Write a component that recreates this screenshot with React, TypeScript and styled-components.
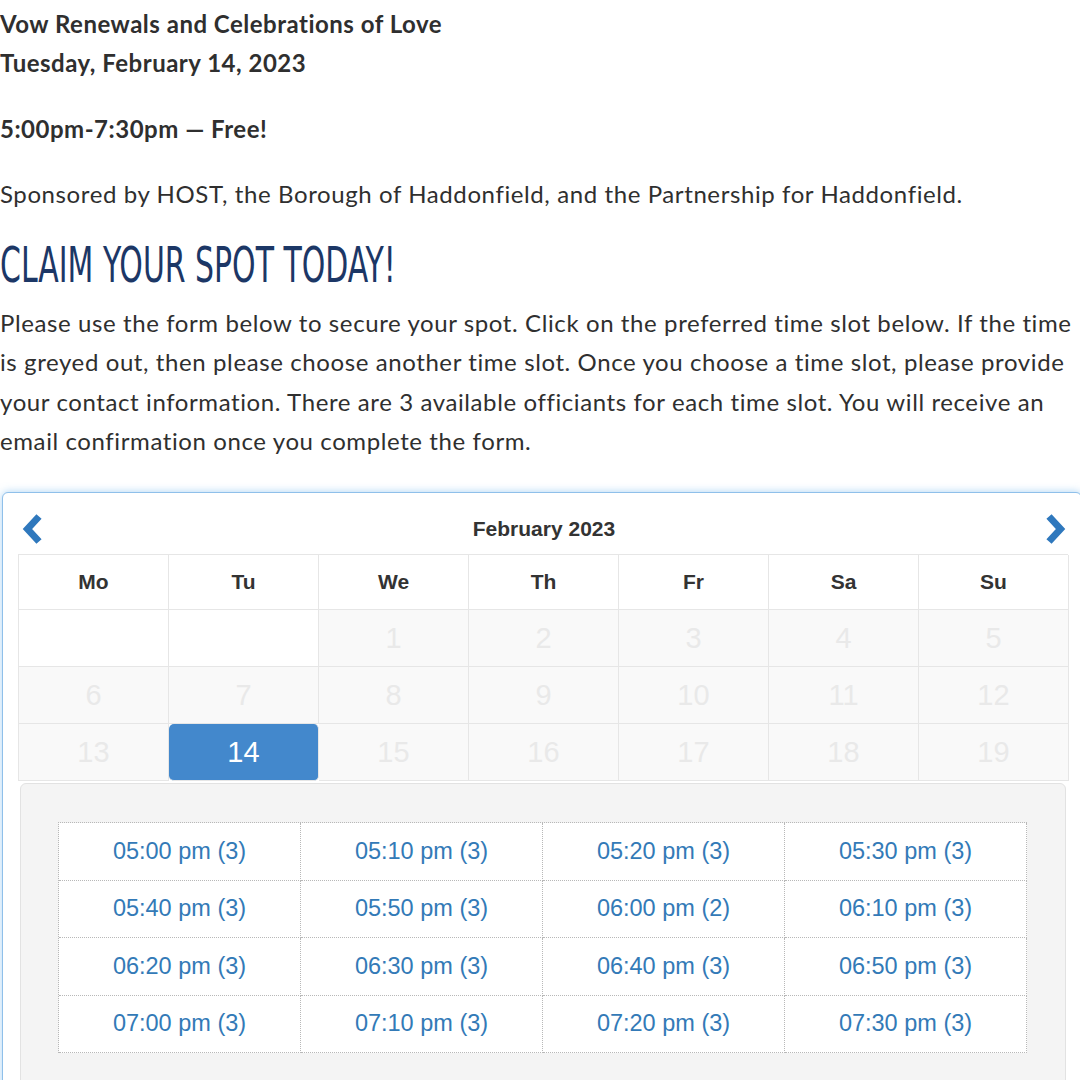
import React from "react";
import styled, { createGlobalStyle } from "styled-components";

const GlobalStyle = createGlobalStyle`
  html, body {
    margin: 0;
    padding: 0;
    background: #ffffff;
    overflow: hidden;
  }
  body {
    font-family: Lato, "Open Sans", sans-serif;
    color: #2f2f2f;
  }
`;

const Page = styled.main`
  width: 1090px;
  padding-top: 4px;
`;

const Line = styled.p<{ $mt?: number; $bold?: boolean }>`
  margin: ${(p) => p.$mt ?? 0}px 0 0;
  font-size: 24px;
  line-height: 39px;
  font-weight: ${(p) => (p.$bold ? 700 : 400)};
  letter-spacing: ${(p) => (p.$bold ? "0.5px" : "0.6px")};
  white-space: nowrap;
`;

const Heading = styled.h2`
  margin: 22px 0 8px;
  height: 60px;
  line-height: 60px;
  font-family: "Liberation Sans Narrow", "DejaVu Sans Condensed", sans-serif;
  font-weight: 400;
  font-size: 50px;
  color: #1c3766;
  transform-origin: left center;
  transform: scaleX(0.665);
  white-space: nowrap;
`;

const Paragraph = styled.p`
  margin: 0;
  font-size: 24px;
  line-height: 39.3px;
  letter-spacing: 0.6px;
  white-space: nowrap;
`;

const Calendar = styled.section`
  margin: 32px 0 0 2px;
  width: 1080px;
  border: 1px solid #8fc0ea;
  border-radius: 6px 6px 0 0;
  box-shadow: 0 0 8px rgba(102, 175, 233, 0.55);
  padding: 0 15px 0;
  box-sizing: border-box;
  background: #ffffff;
  font-family: "Liberation Sans", Arial, sans-serif;
  height: 600px;
`;

const NavRow = styled.div`
  margin-top: 16px;
  height: 40px;
  display: flex;
  align-items: center;
  justify-content: space-between;
  width: 1048px;
  margin-left: 2px;
`;

const Month = styled.div`
  font-weight: 700;
  font-size: 21px;
  color: #333333;
`;

const Arrow = styled.svg`
  width: 24px;
  height: 32px;
  display: block;
`;

const Grid = styled.div`
  margin-top: 5px;
  display: grid;
  grid-template-columns: repeat(7, 150px);
  border-top: 1px solid #e6e6e6;
  border-left: 1px solid #e6e6e6;
  width: 1050px;
  box-sizing: border-box;
`;

const DayName = styled.div`
  height: 54px;
  border-right: 1px solid #e6e6e6;
  border-bottom: 1px solid #e6e6e6;
  display: flex;
  align-items: center;
  justify-content: center;
  font-weight: 700;
  font-size: 21px;
  color: #333333;
`;

const Day = styled.div<{ $state: "empty" | "off" | "active" }>`
  height: 57px;
  box-sizing: border-box;
  border-right: 1px solid #e6e6e6;
  border-bottom: 1px solid #e6e6e6;
  display: flex;
  align-items: center;
  justify-content: center;
  font-size: 29px;
  background: ${(p) =>
    p.$state === "active" ? "#4388cc" : p.$state === "off" ? "#f9f9f9" : "#ffffff"};
  color: ${(p) => (p.$state === "active" ? "#ffffff" : "#e9e9e9")};
  border-radius: ${(p) => (p.$state === "active" ? "5px" : "0")};
`;

const SlotPanel = styled.div`
  margin: 2px 2px 0;
  background: #f4f4f4;
  border: 1px solid #e2e2e2;
  border-radius: 6px 6px 0 0;
  padding: 38px 38px 40px 37px;
  width: 1046px;
  box-sizing: border-box;
`;

const Slots = styled.div`
  display: grid;
  grid-template-columns: repeat(4, 1fr);
  border-top: 1px dotted #b8b8b8;
  border-left: 1px dotted #b8b8b8;
`;

const Slot = styled.div`
  height: 56.5px;
  background: #ffffff;
  border-right: 1px dotted #b8b8b8;
  border-bottom: 1px dotted #b8b8b8;
  display: flex;
  align-items: center;
  justify-content: center;
  font-size: 23.5px;
  color: #337ab7;
`;

const dayNames = ["Mo", "Tu", "We", "Th", "Fr", "Sa", "Su"];

const days: { n: string; state: "empty" | "off" | "active" }[] = [
  { n: "", state: "empty" },
  { n: "", state: "empty" },
  ...["1", "2", "3", "4", "5", "6", "7", "8", "9", "10", "11", "12", "13"].map((n) => ({
    n,
    state: "off" as const,
  })),
  { n: "14", state: "active" },
  ...["15", "16", "17", "18", "19"].map((n) => ({ n, state: "off" as const })),
];

const slots = [
  "05:00 pm (3)", "05:10 pm (3)", "05:20 pm (3)", "05:30 pm (3)",
  "05:40 pm (3)", "05:50 pm (3)", "06:00 pm (2)", "06:10 pm (3)",
  "06:20 pm (3)", "06:30 pm (3)", "06:40 pm (3)", "06:50 pm (3)",
  "07:00 pm (3)", "07:10 pm (3)", "07:20 pm (3)", "07:30 pm (3)",
];

const App: React.FC = () => (
  <>
    <GlobalStyle />
    <Page>
      <Line $bold>Vow Renewals and Celebrations of Love</Line>
      <Line $bold>Tuesday, February 14, 2023</Line>
      <Line $bold $mt={27}>5:00pm-7:30pm — Free!</Line>
      <Line $mt={26}>
        Sponsored by HOST, the Borough of Haddonfield, and the Partnership for Haddonfield.
      </Line>
      <Heading>CLAIM YOUR SPOT TODAY!</Heading>
      <Paragraph>
        Please use the form below to secure your spot. Click on the preferred time slot below. If the time
        <br />
        is greyed out, then please choose another time slot. Once you choose a time slot, please provide
        <br />
        your contact information. There are 3 available officiants for each time slot. You will receive an
        <br />
        email confirmation once you complete the form.
      </Paragraph>

      <Calendar>
        <NavRow>
          <Arrow viewBox="0 0 24 32">
            <polyline points="19,3.5 7.5,16 19,28.5" fill="none" stroke="#2f78bd" strokeWidth="7" strokeLinejoin="miter" />
          </Arrow>
          <Month>February 2023</Month>
          <Arrow viewBox="0 0 24 32">
            <polyline points="5,3.5 16.5,16 5,28.5" fill="none" stroke="#2f78bd" strokeWidth="7" strokeLinejoin="miter" />
          </Arrow>
        </NavRow>
        <Grid>
          {dayNames.map((d) => (
            <DayName key={d}>{d}</DayName>
          ))}
          {days.map((d, i) => (
            <Day key={i} $state={d.state}>
              {d.n}
            </Day>
          ))}
        </Grid>
        <SlotPanel>
          <Slots>
            {slots.map((s) => (
              <Slot key={s}>{s}</Slot>
            ))}
          </Slots>
        </SlotPanel>
      </Calendar>
    </Page>
  </>
);

export default App;
